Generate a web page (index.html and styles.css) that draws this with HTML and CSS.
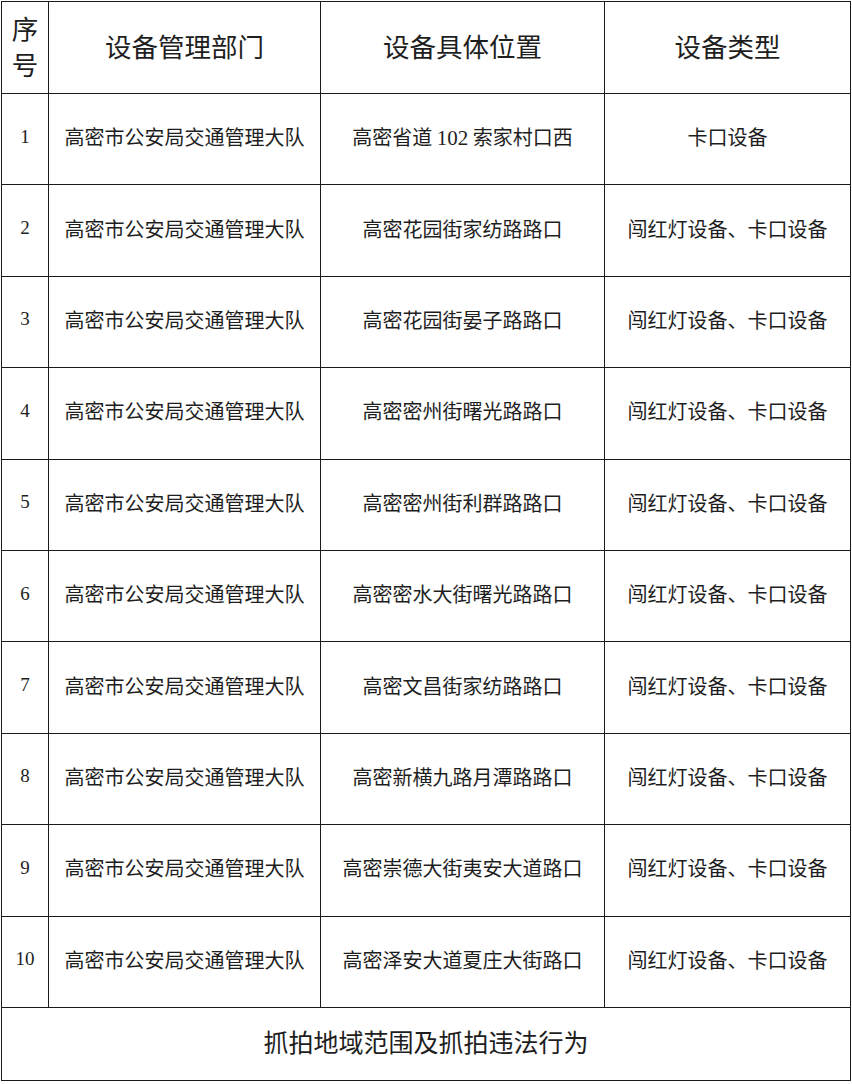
FILE: index.html
```html
<!DOCTYPE html>
<html lang="zh">
<head>
<meta charset="utf-8">
<link rel="stylesheet" href="styles.css">
</head>
<body>
<table class="grid">
  <colgroup>
    <col class="c-no">
    <col class="c-dept">
    <col class="c-loc">
    <col class="c-type">
  </colgroup>
  <thead>
    <tr class="head">
      <th class="no-head">序<br>号</th>
      <th>设备管理部门</th>
      <th>设备具体位置</th>
      <th>设备类型</th>
    </tr>
  </thead>
  <tbody>
    <tr><td class="num">1</td><td>高密市公安局交通管理大队</td><td>高密省道 <span class="digits">102</span> 索家村口西</td><td>卡口设备</td></tr>
    <tr><td class="num">2</td><td>高密市公安局交通管理大队</td><td>高密花园街家纺路路口</td><td>闯红灯设备、卡口设备</td></tr>
    <tr><td class="num">3</td><td>高密市公安局交通管理大队</td><td>高密花园街晏子路路口</td><td>闯红灯设备、卡口设备</td></tr>
    <tr><td class="num">4</td><td>高密市公安局交通管理大队</td><td>高密密州街曙光路路口</td><td>闯红灯设备、卡口设备</td></tr>
    <tr><td class="num">5</td><td>高密市公安局交通管理大队</td><td>高密密州街利群路路口</td><td>闯红灯设备、卡口设备</td></tr>
    <tr><td class="num">6</td><td>高密市公安局交通管理大队</td><td>高密密水大街曙光路路口</td><td>闯红灯设备、卡口设备</td></tr>
    <tr><td class="num">7</td><td>高密市公安局交通管理大队</td><td>高密文昌街家纺路路口</td><td>闯红灯设备、卡口设备</td></tr>
    <tr><td class="num">8</td><td>高密市公安局交通管理大队</td><td>高密新横九路月潭路路口</td><td>闯红灯设备、卡口设备</td></tr>
    <tr><td class="num">9</td><td>高密市公安局交通管理大队</td><td>高密崇德大街夷安大道路口</td><td>闯红灯设备、卡口设备</td></tr>
    <tr><td class="num">10</td><td>高密市公安局交通管理大队</td><td>高密泽安大道夏庄大街路口</td><td>闯红灯设备、卡口设备</td></tr>
    <tr class="foot"><td colspan="4">抓拍地域范围及抓拍违法行为</td></tr>
  </tbody>
</table>
</body>
</html>
```

FILE: styles.css
```css
html, body {
  margin: 0;
  padding: 0;
  background: #ffffff;
}

body {
  padding: 1px 0 0 1px;
  font-family: "Noto Sans CJK SC", "Noto Sans", sans-serif;
  color: #1e1e1e;
}

.grid {
  border-collapse: collapse;
  table-layout: fixed;
  width: 849px;
}

.c-no { width: 47px; }
.c-dept { width: 272px; }
.c-loc { width: 284px; }
.c-type { width: 246px; }

.grid th,
.grid td {
  border: 1px solid #1a1a1a;
  padding: 0 0 5px 0;
  text-align: center;
  vertical-align: middle;
  overflow: hidden;
  white-space: nowrap;
}

.grid th {
  font-weight: 400;
  font-size: 26.5px;
  line-height: 36px;
  padding-bottom: 4px;
}

.head {
  height: 92px;
}

.no-head {
  line-height: 38px;
}

.grid tbody tr {
  height: 91.4px;
}

.grid td {
  font-size: 20px;
}

.grid td.num {
  font-family: "Liberation Serif", "Times New Roman", serif;
  font-size: 19px;
}

.digits {
  font-family: "Liberation Serif", "Times New Roman", serif;
  font-size: 21px;
}

.grid tr.foot {
  height: 73px;
}

.grid tr.foot td {
  font-size: 25px;
}
```
